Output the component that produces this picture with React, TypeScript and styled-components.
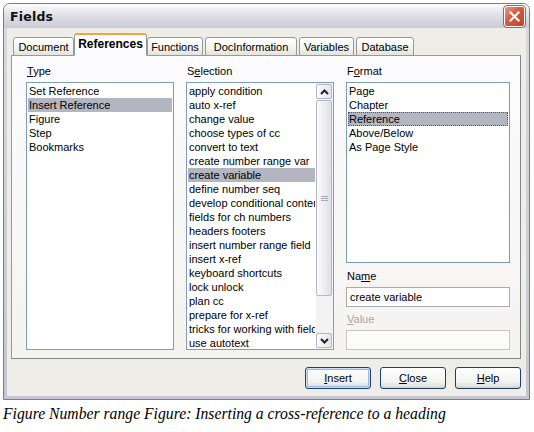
import React from 'react';
import styled, { createGlobalStyle } from 'styled-components';

const Global = createGlobalStyle`
  html, body {
    margin: 0;
    padding: 0;
    background: #ffffff;
  }
  body {
    font-family: "Liberation Sans", Arial, sans-serif;
    font-size: 11px;
    color: #000;
  }
`;

const Page = styled.div`
  width: 534px;
  height: 432px;
  overflow: hidden;
`;

// window frame
const Window = styled.div`
  margin: 3px 0 0 3px;
  width: 525px;
  height: 395px;
  border: 1px solid #7b7b8c;
  border-radius: 7px 7px 0 0;
  background: linear-gradient(#d9d9e2, #c6c6d2);
  display: flex;
  flex-direction: column;
`;

const TitleBar = styled.div`
  height: 25px;
  display: flex;
  align-items: center;
  justify-content: space-between;
  padding: 0 4px 0 6px;
  border-radius: 6px 6px 0 0;
  background: linear-gradient(#fdfdfe 0%, #e6e6ec 35%, #d6d6df 70%, #cbcbd6 100%);
`;

const Title = styled.span`
  font-family: "DejaVu Sans", sans-serif;
  font-weight: bold;
  font-size: 12.5px;
  letter-spacing: 0.2px;
  color: #111;
`;

const CloseBtn = styled.div`
  width: 19px;
  height: 19px;
  border: 1px solid #fff;
  outline: 1px solid #b65a4a;
  border-radius: 3px;
  background: linear-gradient(135deg, #e89a88 0%, #d45a40 45%, #c2412a 100%);
  display: flex;
  align-items: center;
  justify-content: center;
  margin-top: 1px;
`;

const Body = styled.div`
  flex: 1;
  margin: 0 3px 3px 3px;
  background: #eeede8;
  padding: 5px 5px 7px 4px;
  display: flex;
  flex-direction: column;
`;

const TabStrip = styled.div`
  display: flex;
  align-items: flex-end;
  padding-left: 2px;
  gap: 2px;
  height: 23px;
  position: relative;
  z-index: 1;
  margin-bottom: -1px;
`;

const Tab = styled.div<{ $w: number; $active?: boolean }>`
  width: ${p => p.$w}px;
  box-sizing: border-box;
  height: ${p => (p.$active ? 23 : 19)}px;
  display: flex;
  align-items: center;
  justify-content: center;
  font-size: ${p => (p.$active ? 12 : 11)}px;
  font-weight: ${p => (p.$active ? 'bold' : 'normal')};
  border: 1px solid #919b9c;
  border-bottom: ${p => (p.$active ? '1px solid #fcfcfe' : '1px solid #919b9c')};
  border-top: ${p => (p.$active ? '2px solid #f0a43a' : '1px solid #919b9c')};
  border-radius: 3px 3px 0 0;
  background: ${p =>
    p.$active ? '#fcfcfe' : 'linear-gradient(#ffffff, #f3f3ef 60%, #e3e3dc)'};
  margin: ${p => (p.$active ? '0 -2px' : '0')};
  padding-bottom: ${p => (p.$active ? 3 : 0)}px;
`;

const Panel = styled.div`
  height: 304px;
  box-sizing: border-box;
  border: 1px solid #919b9c;
  border-right-color: #7f8888;
  border-bottom-color: #7f8888;
  background: linear-gradient(#fcfcfe, #f4f3ee);
  padding: 9px 10px 8px 14px;
  display: flex;
  gap: 12px;
`;

const Column = styled.div<{ $w: number }>`
  width: ${p => p.$w}px;
  flex: none;
  display: flex;
  flex-direction: column;
`;

const Label = styled.div<{ $disabled?: boolean }>`
  height: 13px;
  line-height: 13px;
  margin-bottom: 4px;
  padding-left: 1px;
  flex: none;
  color: ${p => (p.$disabled ? '#a7a6aa' : '#000')};
  u {
    text-decoration: underline;
  }
`;

const ListBox = styled.div<{ $h?: number }>`
  height: ${p => (p.$h ? `${p.$h}px` : 'auto')};
  flex: ${p => (p.$h ? 'none' : '1')};
  border: 1px solid #7f9db9;
  background: #fff;
  display: flex;
  overflow: hidden;
`;

const Items = styled.div`
  flex: 1;
  min-width: 0;
  padding: 1px 1px 0 1px;
  overflow: hidden;
`;

const Row = styled.div<{ $selected?: boolean; $focus?: boolean }>`
  height: 14px;
  line-height: 14px;
  padding-left: 1px;
  white-space: nowrap;
  overflow: hidden;
  box-sizing: border-box;
  background: ${p => (p.$selected ? '#b3b5c1' : 'transparent')};
  outline: ${p => (p.$focus ? '1px dotted #555' : 'none')};
  outline-offset: -1px;
`;

const ScrollBar = styled.div`
  width: 17px;
  flex: none;
  display: flex;
  flex-direction: column;
  background: #f3f3f6;
  padding: 1px 0 1px 0;
  box-sizing: border-box;
`;

const ScrollBtn = styled.div`
  height: 15px;
  box-sizing: border-box;
  margin: 0 1px 0 0;
  border: 1px solid #b3b8c6;
  border-radius: 2px;
  background: linear-gradient(90deg, #fbfbfd, #e4e5ec);
  display: flex;
  align-items: center;
  justify-content: center;
`;

const Track = styled.div`
  flex: 1;
  display: flex;
  flex-direction: column;
  padding: 1px 0;
`;

const Thumb = styled.div`
  height: 196px;
  box-sizing: border-box;
  margin-right: 1px;
  border: 1px solid #b3b8c6;
  border-radius: 2px;
  background: linear-gradient(90deg, #fbfbfd, #dfe0e8);
  display: flex;
  align-items: center;
  justify-content: center;
`;

const Grip = styled.div`
  width: 7px;
  height: 5px;
  background: repeating-linear-gradient(#a9acb8 0 1px, transparent 1px 2px);
`;

const Field = styled.div<{ $disabled?: boolean }>`
  height: 20px;
  flex: none;
  box-sizing: border-box;
  border: 1px solid ${p => (p.$disabled ? '#c9c7ba' : '#a5acb5')};
  background: ${p => (p.$disabled ? '#fbfbf9' : '#fff')};
  line-height: 18px;
  padding-left: 3px;
  margin-bottom: 6px;
  &:last-child {
    margin-bottom: 0;
  }
`;

const Spacer = styled.div<{ $h: number }>`
  height: ${p => p.$h}px;
  flex: none;
`;

const Buttons = styled.div`
  display: flex;
  justify-content: flex-end;
  gap: 9px;
  margin-top: 8px;
`;

const Button = styled.div<{ $default?: boolean }>`
  width: 66px;
  height: 22px;
  box-sizing: border-box;
  border: 1px solid #1c3f7a;
  border-radius: 3px;
  background: linear-gradient(#ffffff, #f2f2f0 70%, #d8d8d4);
  box-shadow: ${p =>
    p.$default ? 'inset 0 0 0 1px #cfe0f6, inset 0 0 0 2px #9ab9e6' : 'inset 0 -1px 0 #d0d0cc'};
  display: flex;
  align-items: center;
  justify-content: center;
  u {
    text-decoration: underline;
  }
`;

const Caption = styled.div`
  font-family: "Liberation Serif", "Times New Roman", serif;
  font-style: italic;
  font-size: 15.7px;
  line-height: 18px;
  margin: 5px 0 0 3px;
  white-space: nowrap;
`;

const typeItems = ['Set Reference', 'Insert Reference', 'Figure', 'Step', 'Bookmarks'];

const selectionItems = [
  'apply condition',
  'auto x-ref',
  'change value',
  'choose types of cc',
  'convert to text',
  'create number range var',
  'create variable',
  'define number seq',
  'develop conditional content',
  'fields for ch numbers',
  'headers footers',
  'insert number range field',
  'insert x-ref',
  'keyboard shortcuts',
  'lock unlock',
  'plan cc',
  'prepare for x-ref',
  'tricks for working with fields',
  'use autotext',
];

const formatItems = ['Page', 'Chapter', 'Reference', 'Above/Below', 'As Page Style'];

const tabs: { label: string; w: number; active?: boolean }[] = [
  { label: 'Document', w: 61 },
  { label: 'References', w: 73, active: true },
  { label: 'Functions', w: 56 },
  { label: 'DocInformation', w: 92 },
  { label: 'Variables', w: 55 },
  { label: 'Database', w: 58 },
];

const Arrow = ({ up }: { up?: boolean }) => (
  <svg width="9" height="6" viewBox="0 0 9 6">
    <path
      d={up ? 'M1 5 L4.5 1.5 L8 5' : 'M1 1 L4.5 4.5 L8 1'}
      fill="none"
      stroke="#222"
      strokeWidth="2"
    />
  </svg>
);

const App: React.FC = () => {
  return (
    <Page>
      <Global />
      <Window>
        <TitleBar>
          <Title>Fields</Title>
          <CloseBtn>
            <svg width="11" height="11" viewBox="0 0 11 11">
              <path d="M1.5 1.5 L9.5 9.5 M9.5 1.5 L1.5 9.5" stroke="#fff" strokeWidth="2.2" strokeLinecap="square" />
            </svg>
          </CloseBtn>
        </TitleBar>
        <Body>
          <TabStrip>
            {tabs.map(t => (
              <Tab key={t.label} $w={t.w} $active={t.active}>
                {t.label}
              </Tab>
            ))}
          </TabStrip>
          <Panel>
            <Column $w={148}>
              <Label><u>T</u>ype</Label>
              <ListBox>
                <Items>
                  {typeItems.map((it, i) => (
                    <Row key={it} $selected={i === 1}>{it}</Row>
                  ))}
                </Items>
              </ListBox>
            </Column>
            <Column $w={148}>
              <Label>S<u>e</u>lection</Label>
              <ListBox>
                <Items>
                  {selectionItems.map((it, i) => (
                    <Row key={it} $selected={i === 6}>{it}</Row>
                  ))}
                </Items>
                <ScrollBar>
                  <ScrollBtn><Arrow up /></ScrollBtn>
                  <Track>
                    <Thumb><Grip /></Thumb>
                  </Track>
                  <ScrollBtn><Arrow /></ScrollBtn>
                </ScrollBar>
              </ListBox>
            </Column>
            <Column $w={164}>
              <Label>F<u>o</u>rmat</Label>
              <ListBox $h={179}>
                <Items>
                  {formatItems.map((it, i) => (
                    <Row key={it} $selected={i === 2} $focus={i === 2}>{it}</Row>
                  ))}
                </Items>
              </ListBox>
              <Spacer $h={7} />
              <Label>Na<u>m</u>e</Label>
              <Field>create variable</Field>
              <Label $disabled><u>V</u>alue</Label>
              <Field $disabled />
            </Column>
          </Panel>
          <Buttons>
            <Button $default><u>I</u>nsert</Button>
            <Button><u>C</u>lose</Button>
            <Button><u>H</u>elp</Button>
          </Buttons>
        </Body>
      </Window>
      <Caption>Figure Number range Figure: Inserting a cross-reference to a heading</Caption>
    </Page>
  );
};

export default App;
